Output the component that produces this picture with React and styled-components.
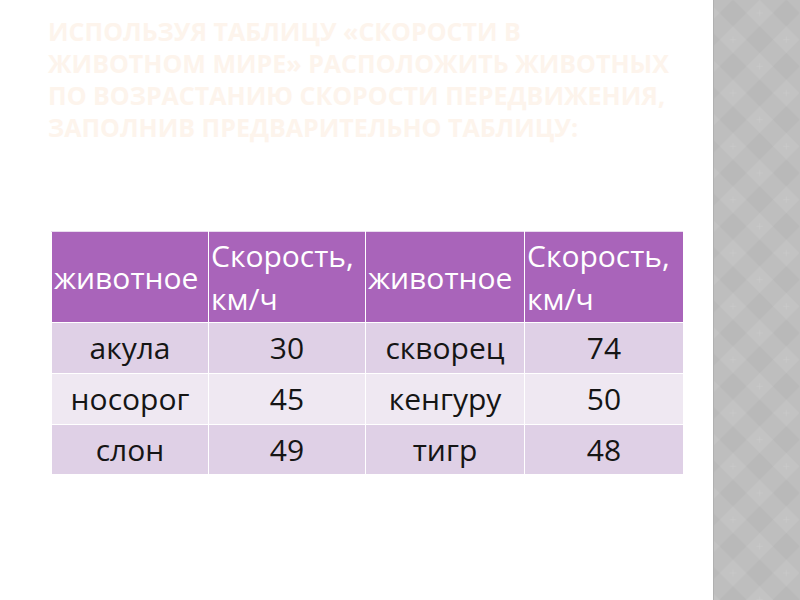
import React from "react";
import styled, { createGlobalStyle } from "styled-components";

const Global = createGlobalStyle`
  html, body { margin: 0; padding: 0; background: #ffffff; }
  body { width: 800px; height: 600px; overflow: hidden; }
`;

const Slide = styled.div`
  width: 800px;
  height: 600px;
  display: flex;
  background: #ffffff;
`;

const Main = styled.main`
  width: 713px;
  display: flex;
  flex-direction: column;
  padding: 15px 0 0 48px;
  box-sizing: border-box;
`;

const Title = styled.h1`
  margin: 0;
  font-family: "Open Sans", "DejaVu Sans", sans-serif;
  font-weight: 700;
  font-size: 25px;
  line-height: 32px;
  text-transform: uppercase;
  color: #fdf4ec;
  width: 636px;
`;

const Sidebar = styled.aside`
  width: 87px;
  height: 600px;
  flex: none;
  box-sizing: border-box;
  border-left: 1px solid #b0b0b0;
  background: #bdbdbd;
  display: flex;
`;

const Texture = styled.svg`
  width: 100%;
  height: 100%;
  display: block;
`;

const Table = styled.table`
  margin: 88px 0 0 3px;
  width: 632px;
  border-collapse: collapse;
  font-family: "Open Sans", "DejaVu Sans", sans-serif;
  font-size: 30px;
  table-layout: fixed;
`;

const HeadCell = styled.th`
  width: ${(p) => p.$w}px;
  height: 91px;
  padding: 0 0 0 2px;
  box-sizing: border-box;
  background: #a964ba;
  color: #ffffff;
  font-weight: 400;
  text-align: left;
  line-height: 43px;
  border: 1px solid #ffffff;
  border-top-color: #e9dcef;
`;

const Cell = styled.td`
  height: ${(p) => p.$h}px;
  padding: 0;
  box-sizing: border-box;
  background: ${(p) => (p.$alt ? "#efe8f2" : "#dfd0e6")};
  color: #151515;
  text-align: center;
  line-height: 1;
  border: 1px solid #ffffff;
`;

const head = [
  ["животное", 157],
  ["Скорость, км/ч", 157],
  ["животное", 159],
  ["Скорость, км/ч", 159],
];

const rows = [
  ["акула", "30", "скворец", "74"],
  ["носорог", "45", "кенгуру", "50"],
  ["слон", "49", "тигр", "48"],
];

const S = 80 / 3;
const H = S / 2;
const diamond = (cx, cy) =>
  `M${cx} ${cy - H}L${cx + H} ${cy}L${cx} ${cy + H}L${cx - H} ${cy}Z`;

function DiamondTexture() {
  return (
    <Texture xmlns="http://www.w3.org/2000/svg">
      <defs>
        <pattern
          id="dm"
          patternUnits="userSpaceOnUse"
          width={2 * S}
          height={2 * S}
          x={19 - H}
          y={13 - H}
        >
          <rect width={2 * S} height={2 * S} fill="#bebebe" />
          <path d={diamond(H, H) + diamond(H + S, H + S)} fill="#b9b9b9" />
          <path d={diamond(H + S, H) + diamond(H, H + S)} fill="#c3c3c3" />
          <path
            d={`M${H + S - 3} ${H}h6M${H + S} ${H - 3}v6M${H - 3} ${H + S}h6M${H} ${H + S - 3}v6`}
            stroke="#cacaca"
            strokeWidth="0.8"
          />
        </pattern>
      </defs>
      <rect width="100%" height="100%" fill="url(#dm)" />
    </Texture>
  );
}

export default function App() {
  return (
    <Slide>
      <Global />
      <Main>
        <Title>
          Используя таблицу «Скорости в животном мире» расположить животных по
          возрастанию скорости передвижения, заполнив предварительно таблицу:
        </Title>
        <Table>
          <thead>
            <tr>
              {head.map(([t, w], i) => (
                <HeadCell key={i} $w={w}>
                  {t}
                </HeadCell>
              ))}
            </tr>
          </thead>
          <tbody>
            {rows.map((r, i) => (
              <tr key={i}>
                {r.map((c, j) => (
                  <Cell key={j} $alt={i % 2 === 1} $h={i === 2 ? 50 : 51}>
                    {c}
                  </Cell>
                ))}
              </tr>
            ))}
          </tbody>
        </Table>
      </Main>
      <Sidebar>
        <DiamondTexture />
      </Sidebar>
    </Slide>
  );
}
